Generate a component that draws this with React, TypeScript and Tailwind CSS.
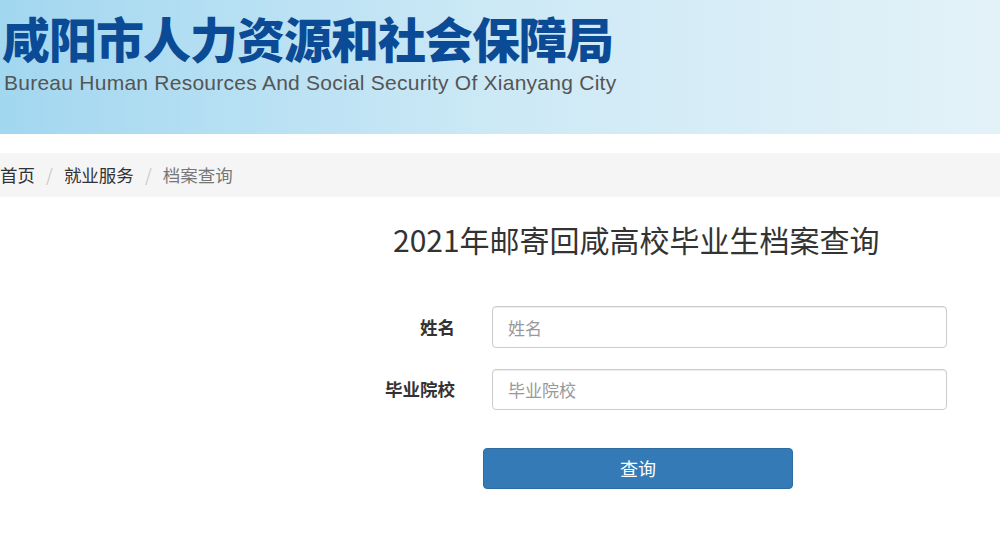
export default function App() {
  return (
    <div className="min-h-[535px] w-[1000px] overflow-hidden bg-white font-['Microsoft_YaHei','Noto_Sans_CJK_SC',sans-serif]">
      {/* Banner */}
      <header className="h-[134px] bg-gradient-to-r from-[#a2d7f0] via-[#cde9f6] to-[#e3f2f8]">
        <div className="pl-[2px] pt-[11px]">
          <h1 className="whitespace-nowrap font-['Noto_Sans_CJK_SC',sans-serif] text-[48px] font-black leading-[52px] tracking-[-1px] text-[#0b4b96]">
            咸阳市人力资源和社会保障局
          </h1>
          <p className="mt-[8px] whitespace-nowrap pl-[2px] font-['Liberation_Sans',Arial,sans-serif] text-[21px] leading-[24px] tracking-[0.25px] text-[#555]">
            Bureau Human Resources And Social Security Of Xianyang City
          </p>
        </div>
      </header>

      {/* Breadcrumb */}
      <nav className="mt-[19px] flex h-[44px] items-center bg-[#f5f5f5] text-[17.5px]">
        <span className="text-[#333]">首页</span>
        <span className="px-[11px] text-[#ccc]">/</span>
        <span className="text-[#333]">就业服务</span>
        <span className="px-[11px] text-[#ccc]">/</span>
        <span className="text-[#777]">档案查询</span>
      </nav>

      {/* Form */}
      <main className="flex flex-col">
        <h2 className="mt-[22px] ml-[393px] whitespace-nowrap text-[30px] font-normal leading-[40px] text-[#333]">
          2021年邮寄回咸高校毕业生档案查询
        </h2>

        <div className="mt-[47px] flex flex-col gap-[21px] pr-[53px]">
          <div className="flex items-center">
            <label className="w-[456px] pr-[1px] text-right text-[17.5px] font-bold text-[#333]">姓名</label>
            <input
              placeholder="姓名"
              className="ml-[36px] h-[42px] w-[455px] rounded-[4px] border border-[#ccc] px-[15px] text-[17px] text-[#555] shadow-[inset_0_1px_1px_rgba(0,0,0,0.075)] placeholder:text-[#999]"
            />
          </div>
          <div className="flex items-center">
            <label className="w-[456px] pr-[1px] text-right text-[17.5px] font-bold text-[#333]">毕业院校</label>
            <input
              placeholder="毕业院校"
              className="ml-[36px] h-[41px] w-[455px] rounded-[4px] border border-[#ccc] px-[15px] text-[17px] text-[#555] shadow-[inset_0_1px_1px_rgba(0,0,0,0.075)] placeholder:text-[#999]"
            />
          </div>
        </div>

        <div className="mt-[38px] ml-[483px]">
          <button className="h-[41px] w-[310px] rounded-[4px] border border-[#2e6da4] bg-[#337ab7] text-[18px] text-white">
            查询
          </button>
        </div>
      </main>
    </div>
  );
}
